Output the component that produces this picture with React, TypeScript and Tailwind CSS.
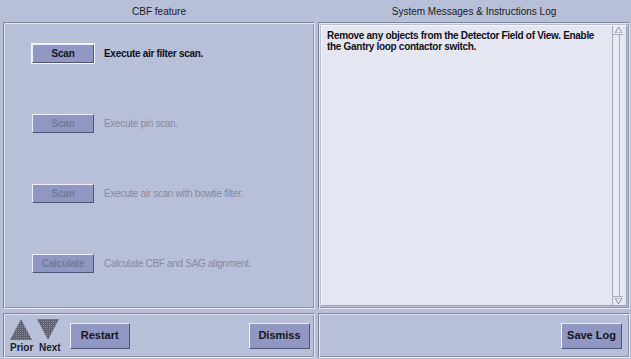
import React from 'react';

const font = { fontFamily: '"Liberation Sans", Arial, sans-serif' };

function Btn({
  label,
  disabled,
  focused,
  className = '',
}: {
  label: string;
  disabled?: boolean;
  focused?: boolean;
  className?: string;
}) {
  return (
    <div
      className={`flex items-center justify-center border border-t-[#eef0f8] border-l-[#eef0f8] border-r-[#4e5475] border-b-[#4e5475] bg-[#8f97c2] font-bold ${
        disabled ? 'text-[#737b9c]' : 'text-[#151520]'
      } ${focused ? 'outline outline-1 outline-[#f4f5fb]' : ''} ${className}`}
    >
      {label}
    </div>
  );
}

function Panel({ children, className = '' }: { children?: React.ReactNode; className?: string }) {
  return (
    <div
      className={`border border-t-[#7f859c] border-l-[#7f859c] border-r-[#e6e8f2] border-b-[#e6e8f2] shadow-[inset_1px_1px_0_#e2e5f0,inset_-1px_-1px_0_#8d93aa] ${className}`}
    >
      {children}
    </div>
  );
}

const steps = [
  { btn: 'Scan', text: 'Execute air filter scan.', enabled: true },
  { btn: 'Scan', text: 'Execute pin scan.', enabled: false },
  { btn: 'Scan', text: 'Execute air scan with bowtie filter.', enabled: false },
  { btn: 'Calculate', text: 'Calculate CBF and SAG alignment.', enabled: false },
];

function Triangle({ up }: { up?: boolean }) {
  return (
    <svg width="22" height="21" viewBox="0 0 22 21">
      <defs>
        <pattern id={up ? 'dotU' : 'dotD'} width="2" height="2" patternUnits="userSpaceOnUse">
          <rect width="2" height="2" fill="#5e6070" />
          <rect width="1" height="1" fill="#8a8c9a" />
        </pattern>
      </defs>
      <polygon
        points={up ? '11,0 22,21 0,21' : '0,0 22,0 11,21'}
        fill={`url(#${up ? 'dotU' : 'dotD'})`}
      />
    </svg>
  );
}

export default function App() {
  return (
    <div className="w-[631px] h-[359px] bg-[#b8bfd9] flex gap-[3px] pl-[3px] overflow-hidden" style={font}>
      {/* Left column */}
      <div className="w-[312px] flex flex-col">
        <div className="h-[22px] flex items-center justify-center text-[10px] text-[#1a1a24]">CBF feature</div>
        <Panel className="h-[287px] flex flex-col pl-[28px] pt-[21px]">
          {steps.map((s, i) => (
            <div key={i} className="flex items-center gap-[10px] h-[19px] mb-[51px]">
              <Btn
                label={s.btn}
                disabled={!s.enabled}
                focused={s.enabled}
                className="w-[62px] h-[19px] text-[10px] tracking-[-0.2px]"
              />
              <span
                className={`text-[10px] tracking-[-0.3px] ${
                  s.enabled ? 'font-bold text-[#10101a]' : 'text-[#868a9f]'
                }`}
              >
                {s.text}
              </span>
            </div>
          ))}
        </Panel>
        <Panel className="mt-[4px] h-[45px] flex items-center pl-[6px] pr-[4px]">
          <div className="flex flex-col mt-[2px]">
            <div className="flex gap-[5px]">
              <Triangle up />
              <Triangle />
            </div>
            <div className="flex text-[10px] font-bold text-[#20202c] leading-[12px] mt-[2px]">
              <span className="w-[29px]">Prior</span>
              <span>Next</span>
            </div>
          </div>
          <Btn label="Restart" className="w-[60px] h-[26px] ml-[9px] text-[11px]" />
          <div className="flex-1" />
          <Btn label="Dismiss" className="w-[61px] h-[26px] text-[11px]" />
        </Panel>
      </div>

      {/* Right column */}
      <div className="w-[312px] flex flex-col">
        <div className="h-[22px] flex items-center justify-center text-[10px] text-[#1a1a24]">
          System Messages &amp; Instructions Log
        </div>
        <Panel className="h-[287px] p-[2px]">
          <div className="h-full flex bg-[#e4e6f1] border border-t-[#f6f7fb] border-l-[#f6f7fb] border-r-[#9aa0b6] border-b-[#9aa0b6]">
            <div className="flex-1 px-[5px] pt-[4px] text-[10px] tracking-[-0.3px] font-bold text-[#10101a] leading-[11px]">
              Remove any objects from the Detector Field of View. Enable the Gantry loop contactor switch.
            </div>
            <div className="w-[11px] flex flex-col border-l border-l-[#a4aabf] bg-[#e8eaf3] mr-[3px]">
              <div className="h-[9px] flex items-center justify-center border-b border-b-[#a4aabf]">
                <svg width="7" height="6" viewBox="0 0 7 6">
                  <polygon points="3.5,0 7,6 0,6" fill="none" stroke="#8a90a6" strokeWidth="1" />
                </svg>
              </div>
              <div className="flex-1 flex">
                <div className="flex-1 border-r border-r-[#a4aabf]" />
                <div className="w-[3px]" />
              </div>
              <div className="h-[9px] flex items-center justify-center border-t border-t-[#a4aabf]">
                <svg width="7" height="6" viewBox="0 0 7 6">
                  <polygon points="0,0 7,0 3.5,6" fill="none" stroke="#8a90a6" strokeWidth="1" />
                </svg>
              </div>
            </div>
          </div>
        </Panel>
        <Panel className="mt-[4px] h-[45px] flex items-center justify-end pr-[7px]">
          <Btn label="Save Log" className="w-[61px] h-[26px] text-[11px]" />
        </Panel>
      </div>
    </div>
  );
}
